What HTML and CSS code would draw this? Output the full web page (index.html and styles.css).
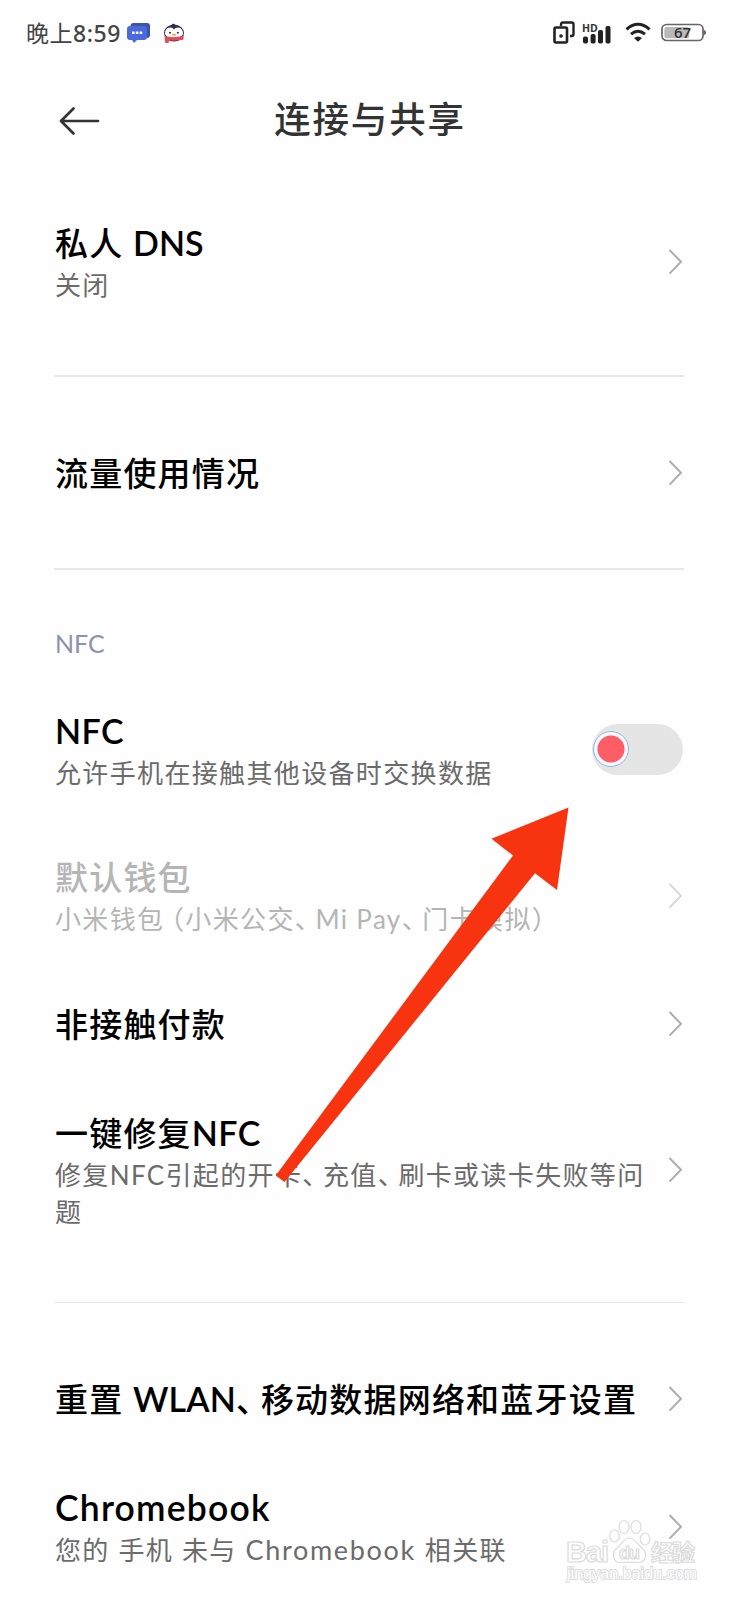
FILE: index.html
```html
<!DOCTYPE html>
<html lang="zh-CN">
<head>
<meta charset="utf-8">
<title>连接与共享</title>
<link rel="stylesheet" href="styles.css">
</head>
<body>
<svg class="defs" width="0" height="0"><symbol id="chev" viewBox="0 0 15 28"><path d="M1.5 2 L13 13.8 L1.5 25.6" fill="none" stroke="currentColor" stroke-width="2"/></symbol></svg>
<div class="screen">
  <div class="status">
    <span class="clock">晚上<span class="clock-num">8:59</span></span>
    <svg class="msg" width="24" height="22" viewBox="0 0 24 22"><rect x="3.500" y="1" width="19.500" height="15" rx="3" fill="#3d55a8"/><path d="M3 4H17Q20 4 20 7V15Q20 18 17 18H10L7 21L5 18H3Q0 18 0 15V7Q0 4 3 4Z" fill="#4a69dc"/><path d="M5 9.500h2.600v2.600H5zM8.800 9.500h2.600v2.600H8.800zM12.600 9.500h2.600v2.600h-2.600z" fill="#fff"/></svg>
    <svg class="penguin" width="22" height="22" viewBox="0 0 22 22"><path d="M9 3Q8 1 10.500 2Q11.500 1 12 3Z" fill="#28304e"/><ellipse cx="11" cy="11" rx="10" ry="8.600" fill="#28304e"/><path d="M2 12Q1.800 6 7 5.500Q10 5.500 11 7.500Q12 5.500 15 5.500Q20.200 6 20 12Q18 17 11 17Q4 17 2 12Z" fill="#fff"/><circle cx="7" cy="10.800" r="1" fill="#28304e"/><circle cx="14.800" cy="10.800" r="1" fill="#28304e"/><ellipse cx="11" cy="12.800" rx="2.200" ry="1" fill="#f0a348"/><path d="M1.500 14Q11 16.500 20.500 13.500V17.500Q17 19 6 18.500L5.500 21H2.300Z" fill="#e04a5c"/></svg>
    <div class="status-right">
      <svg width="22" height="24" viewBox="0 0 22 24"><path d="M8 5V4Q8 1.500 10 1.500H18.500Q20.500 1.500 20.500 3.500V13Q20.500 15 18.500 15H17" fill="none" stroke="#222" stroke-width="2.400"/><rect x="1.500" y="6.500" width="12.500" height="15" rx="1.500" fill="#fff" stroke="#222" stroke-width="2.600"/><circle cx="8" cy="15" r="1.800" fill="#222"/></svg>
      <svg class="signal" width="30" height="24" viewBox="0 0 30 24"><g fill="#222"><rect x="1" y="15.500" width="5" height="7" rx="1.800"/><rect x="8.600" y="13" width="5" height="9.500" rx="1.800"/><rect x="16" y="9" width="5" height="13.500" rx="1.800"/><rect x="23.500" y="5" width="5" height="17.500" rx="1.800"/></g><text x="0" y="10.500" class="hd">HD</text></svg>
      <svg class="wifi" width="26" height="22" viewBox="0 0 26 22"><g fill="none" stroke="#222" stroke-width="3"><path d="M1.500 7.300Q13 -2.800 24.500 7.300"/><path d="M6 12.200Q13 6.200 20 12.200"/></g><path d="M9 16Q13 13 17 16L13 19.800Z" fill="#222"/></svg>
      <svg class="battery" width="45" height="24" viewBox="0 -2 45 24"><rect x="1" y="1.500" width="41" height="16" rx="4.500" fill="#fff" stroke="#666" stroke-width="1.700"/><rect x="3.300" y="4" width="25" height="11.200" rx="2.500" fill="#b9b9b9"/><path d="M42.500 7Q45 7 45 9.500T42.500 12Z" fill="#666"/><text x="21.500" y="15" text-anchor="middle" class="pct">67</text></svg>
    </div>
  </div>
  <div class="header">
    <svg class="back" width="42" height="30" viewBox="0 0 42 30"><path d="M40 15H3M15.500 2.500L3 15L15.500 27.500" fill="none" stroke="#333" stroke-width="2.700" stroke-linecap="round" stroke-linejoin="round"/></svg>
    <h1 class="heading">连接与共享</h1>
  </div>

  <div class="group first">
    <div class="row"><div class="text"><div class="title">私人 <span class="lt dns">DNS</span></div><div class="sub">关闭</div></div><svg class="chev"><use href="#chev"/></svg></div>
  </div>
  <div class="group">
    <div class="row"><div class="text"><div class="title">流量使用情况</div></div><svg class="chev"><use href="#chev"/></svg></div>
  </div>
  <div class="group nfc">
    <div class="label">NFC</div>
    <div class="row"><div class="text"><div class="title"><span class="lt">NFC</span></div><div class="sub">允许手机在接触其他设备时交换数据</div></div><div class="toggle"><div class="knob"></div></div></div>
    <div class="row disabled"><div class="text"><div class="title">默认钱包</div><div class="sub">小米钱包<span class="open">（</span>小米公交<span class="comma">、</span><span class="lt">Mi Pay</span><span class="comma">、</span>门卡模拟<span class="close">）</span></div></div><svg class="chev"><use href="#chev"/></svg></div>
    <div class="row"><div class="text"><div class="title">非接触付款</div></div><svg class="chev"><use href="#chev"/></svg></div>
    <div class="row"><div class="text"><div class="title">一键修复<span class="lt">NFC</span></div><div class="sub">修复<span class="lt">NFC</span>引起的开卡<span class="comma">、</span>充值<span class="comma">、</span>刷卡或读卡失败等问<br>题</div></div><svg class="chev"><use href="#chev"/></svg></div>
  </div>
  <div class="group last">
    <div class="row"><div class="text"><div class="title">重置 <span class="lt wlan">WLAN</span><span class="comma">、</span>移动数据网络和蓝牙设置</div></div><svg class="chev"><use href="#chev"/></svg></div>
    <div class="row"><div class="text"><div class="title"><span class="lt chrome">Chromebook</span></div><div class="sub spaced">您的 手机 未与 <span class="lt chrome">Chromebook</span> 相关联</div></div><svg class="chev"><use href="#chev"/></svg></div>
  </div>

  <svg class="arrow" width="294" height="376" viewBox="275 807 294 376"><path d="M568.500 807.500L491.500 838.700L513 855.500L275.700 1175.500L284.500 1182L535 873.300L557 890Z" fill="#f73310"/></svg>
  <svg class="mark" width="144" height="74" viewBox="-6 0 144 74">
    <g fill="#fff" stroke="#d9d9d9" stroke-width="1.200">
      <ellipse cx="58" cy="12" rx="5" ry="6.500"/><ellipse cx="70" cy="12" rx="5" ry="6.500"/><ellipse cx="48.500" cy="21" rx="4.800" ry="6"/><ellipse cx="79" cy="24" rx="4.800" ry="6"/>
      <path d="M63.500 23C58 23 56 29 51 33C45 38 47 48 55 47.500C61 47 66 47 72 47.500C80 48 82 38 76 33C71 29 69 23 63.500 23Z"/>
      <text x="0" y="46.500" class="wm-bai" textLength="43">Bai</text><text x="53" y="44" class="wm-du" textLength="21">du</text><text x="85" y="46" class="wm-cn" textLength="44">经验</text>
    </g>
    <text x="1" y="64" class="wm-url" textLength="130">jingyan.baidu.com</text>
  </svg>
</div>
</body>
</html>
```
FILE: styles.css
```css
* { box-sizing: border-box; }
body { margin: 0; background: #fefefe; color: #000; font-family: "Noto Sans CJK SC", sans-serif; }
.defs { position: absolute; }
.screen { position: relative; width: 738px; height: 1600px; overflow: hidden; }

.status { display: flex; align-items: center; height: 66px; padding: 0 32px 0 26px; color: #444; }
.clock { height: 32px; font-size: 23px; line-height: 30px; letter-spacing: .5px; white-space: nowrap; }
.clock-num { font-family: "Noto Sans", sans-serif; font-size: 23px; font-weight: 500; line-height: 1; letter-spacing: .6px; }
.msg { margin-left: 6px; }
.penguin { margin-left: 12px; }
.status-right { display: flex; align-items: center; margin-left: auto; }
.signal { margin-left: 7px; }
.hd { font: 700 10.5px "Open Sans", sans-serif; fill: #333; stroke: #fff; stroke-width: 1.5px; paint-order: stroke; }
.wifi { margin-left: 13px; }
.battery { margin-left: 10px; }
.pct { font: 600 15px "Open Sans", sans-serif; fill: #333; }

.header { display: flex; align-items: center; height: 105px; padding: 0 58px; }
.back { margin-top: 4px; }
.heading { flex: 1; margin: 0 40px 2px 0; text-align: center; font-size: 36.5px; line-height: 50px; font-weight: 500; letter-spacing: 1.8px; color: #333; }

.group { margin: 0 54px; padding: 41.5px 0 40.5px; border-bottom: 2px solid #e8e8e8; }
.first { padding-top: 17.5px; }
.nfc { padding-top: 54.5px; padding-bottom: 40.5px; border-bottom-width: 1px; }
.last { border-bottom: 0; }
.row { display: flex; align-items: center; justify-content: space-between; padding: 31.5px 0; }
.nfc .row { padding-bottom: 31.8px; }
.text { position: relative; top: -1px; white-space: nowrap; padding-left: 1px; }
.title { font-size: 33px; line-height: 46px; height: 46px; font-weight: 500; letter-spacing: 1.2px; }
.sub { font-size: 26px; line-height: 37px; letter-spacing: 1.35px; color: #6b6b6b; }
.lt { font-family: Lato, sans-serif; font-weight: 400; line-height: 1; }
.title .lt { font-weight: 600; font-size: 34px; letter-spacing: .4px; }
.title .dns, .title .wlan { margin-left: 1px; }
.title .dns { letter-spacing: 0; }
.title .wlan { letter-spacing: .1px; }
.title .chrome { font-size: 35.5px; letter-spacing: 1.2px; }
.sub .chrome { font-size: 27px; letter-spacing: 1.7px; }
.spaced { word-spacing: 1.6px; }
.comma, .open, .close { font-feature-settings: "halt"; }
.comma { letter-spacing: 7.7px; }
.title .comma { letter-spacing: 8.5px; }
.open { margin-left: 6.6px; }
.label { height: 37px; margin-bottom: 15px; padding-left: 1px; font: 400 25px/37px Lato, sans-serif; color: #8b93ad; }
.disabled .title, .disabled .sub { color: #b5b5b5; }
.chev { flex: none; width: 15px; height: 28px; margin-right: 1px; color: #aeaeae; }
.disabled .chev { color: #d8d8d8; }
.toggle { width: 91px; height: 51px; margin-right: 1px; border-radius: 26px; background: #e5e5e5; padding: 7px 0 0 1px; }
.knob { width: 36px; height: 36px; border-radius: 50%; border: 1px solid #8fb8dc; background: radial-gradient(circle, #fd5d66 13px, #f7f7fd 14px); }

.arrow { position: absolute; left: 275px; top: 807px; }
.mark { position: absolute; left: 560px; top: 1515px; opacity: .9; }
.wm-bai { font: 700 29px "Liberation Sans", sans-serif; }
.wm-du { font: 700 18px "Liberation Sans", sans-serif; }
.wm-cn { font: 700 23px "Noto Sans CJK SC", sans-serif; }
.wm-url { font: 400 16px "Liberation Sans", sans-serif; fill: #fff; stroke: #d9d9d9; stroke-width: 1.8px; paint-order: stroke; }
```
